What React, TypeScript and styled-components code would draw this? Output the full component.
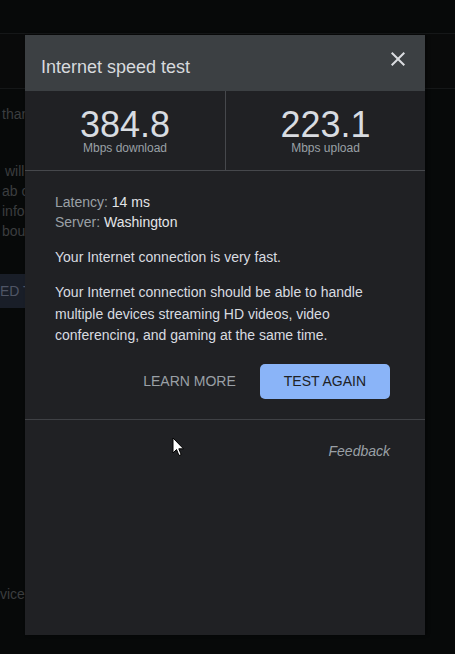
import React from 'react'
import styled, { createGlobalStyle } from 'styled-components'

const GlobalStyle = createGlobalStyle`
  body {
    margin: 0;
    background: #070909;
    font-family: "Liberation Sans", Arial, sans-serif;
  }
`

const App = () => {
  return (
    <>
      <GlobalStyle />
      <Page>
        {/* the page behind the dialog, dimmed */}
        <Backdrop>
          <BgRule />
          <BgBand />
          <BgRule />
          <BgText $top={15}>than your last test</BgText>
          <BgText $top={37} $indent={5}>will use your data</BgText>
          <BgText>ab connection</BgText>
          <BgText>information</BgText>
          <BgText>bout it</BgText>
          <BgButton>ED TEST</BgButton>
          <BgText $top={276} $indent={0}>vices</BgText>
        </Backdrop>

        <Dialog>
          <Header>
            <Title>Internet speed test</Title>
            <Close aria-label="Close">
              <svg width="24" height="24" viewBox="0 0 24 24">
                <path
                  fill="#dadce0"
                  d="M19 6.41L17.59 5 12 10.59 6.41 5 5 6.41 10.59 12 5 17.59 6.41 19 12 13.41 17.59 19 19 17.59 13.41 12z"
                />
              </svg>
            </Close>
          </Header>

          <Stats>
            <Stat>
              <StatValue>384.8</StatValue>
              <StatLabel>Mbps download</StatLabel>
            </Stat>
            <Stat>
              <StatValue>223.1</StatValue>
              <StatLabel>Mbps upload</StatLabel>
            </Stat>
          </Stats>

          <Body>
            <Details>
              <Detail>
                Latency: <strong>14 ms</strong>
              </Detail>
              <Detail>
                Server: <strong>Washington</strong>
              </Detail>
            </Details>
            <Status>Your Internet connection is very fast.</Status>
            <Description>
              Your Internet connection should be able to handle multiple devices
              streaming HD videos, video conferencing, and gaming at the same time.
            </Description>
            <Actions>
              <TextButton>Learn more</TextButton>
              <PrimaryButton>Test again</PrimaryButton>
            </Actions>
          </Body>

          <Footer>
            <Feedback>Feedback</Feedback>
          </Footer>

          <Cursor width="13" height="20" viewBox="0 0 13 20">
            <path
              d="M1 1 L1 16 L4.5 12.5 L7 18.5 L9.2 17.6 L6.8 11.8 L11.5 11.8 Z"
              fill="#fff"
              stroke="#000"
              strokeWidth="1"
              strokeLinejoin="round"
            />
          </Cursor>
        </Dialog>
      </Page>
    </>
  )
}

const Page = styled.div`
  position: relative;
  width: 455px;
  height: 654px;
  overflow: hidden;
  background: #070909;
`

const Backdrop = styled.div`
  display: flex;
  flex-direction: column;
  padding-top: 33px;
`

const BgRule = styled.div`
  height: 1px;
  background: #151718;
`

const BgBand = styled.div`
  height: 54px;
  background: #090a0a;
`

const BgText = styled.div<{ $top?: number; $indent?: number }>`
  margin-top: ${(p) => p.$top ?? 0}px;
  padding-left: ${(p) => p.$indent ?? 2}px;
  font-size: 14px;
  line-height: 20px;
  color: #3b3d3f;
  white-space: nowrap;
`

const BgButton = styled.div`
  margin-top: 33px;
  width: 120px;
  height: 34px;
  display: flex;
  align-items: center;
  background: #191e28;
  color: #4f5565;
  font-size: 14px;
  white-space: nowrap;
`

const Dialog = styled.div`
  position: absolute;
  left: 25px;
  top: 35px;
  width: 400px;
  height: 600px;
  display: flex;
  flex-direction: column;
  background: #202124;
  box-shadow: 2px 0 3px rgba(0, 0, 0, 0.4);
`

const Header = styled.div`
  height: 56px;
  display: flex;
  align-items: center;
  justify-content: space-between;
  padding: 0 15px 0 16px;
  background: #3c4043;
`

const Title = styled.h1`
  margin: 8px 0 0;
  font-size: 18px;
  font-weight: 400;
  line-height: 24px;
  color: #d7dadd;
`

const Close = styled.button`
  width: 24px;
  height: 24px;
  margin-bottom: 8px;
  padding: 0;
  border: 0;
  background: none;
  display: flex;
`

const Stats = styled.div`
  display: grid;
  grid-template-columns: 1fr 1fr;
  border-bottom: 1px solid #46484c;
`

const Stat = styled.div`
  display: flex;
  flex-direction: column;
  align-items: center;
  padding: 18px 0 15px;

  & + & {
    border-left: 1px solid #46484c;
  }
`

const StatValue = styled.div`
  font-size: 36px;
  line-height: 31px;
  color: #d8dce1;
`

const StatLabel = styled.div`
  margin-top: 1px;
  font-size: 12px;
  line-height: 14px;
  color: #9aa0a6;
`

const Body = styled.div`
  padding: 21px 35px 20px 30px;
  border-bottom: 1px solid #3f4145;
`

const Details = styled.div`
  font-size: 14px;
  line-height: 20px;
  color: #9aa0a6;
`

const Detail = styled.div`
  strong {
    font-weight: 400;
    color: #e3e5e8;
  }
`

const Status = styled.p`
  margin: 15px 0 0;
  font-size: 14px;
  line-height: 20px;
  color: #d9dce0;
`

const Description = styled.p`
  margin: 15px 0 0;
  font-size: 14px;
  line-height: 21.5px;
  color: #d9dce0;
`

const Actions = styled.div`
  display: flex;
  justify-content: flex-end;
  margin-top: 17px;
`

const TextButton = styled.button`
  height: 35px;
  padding: 0 24px;
  border: 0;
  background: none;
  font-family: inherit;
  font-size: 14px;
  text-transform: uppercase;
  color: #9aa0a6;
`

const PrimaryButton = styled.button`
  height: 35px;
  padding: 0 24px;
  border: 0;
  border-radius: 5px;
  background: #8ab4f8;
  font-family: inherit;
  font-size: 14px;
  text-transform: uppercase;
  color: #202124;
`

const Footer = styled.div`
  display: flex;
  justify-content: flex-end;
  padding: 21px 35px 0;
`

const Feedback = styled.span`
  font-size: 14px;
  line-height: 20px;
  font-style: italic;
  color: #9aa0a6;
`

const Cursor = styled.svg`
  position: absolute;
  left: 147px;
  top: 402px;
`

export default App
